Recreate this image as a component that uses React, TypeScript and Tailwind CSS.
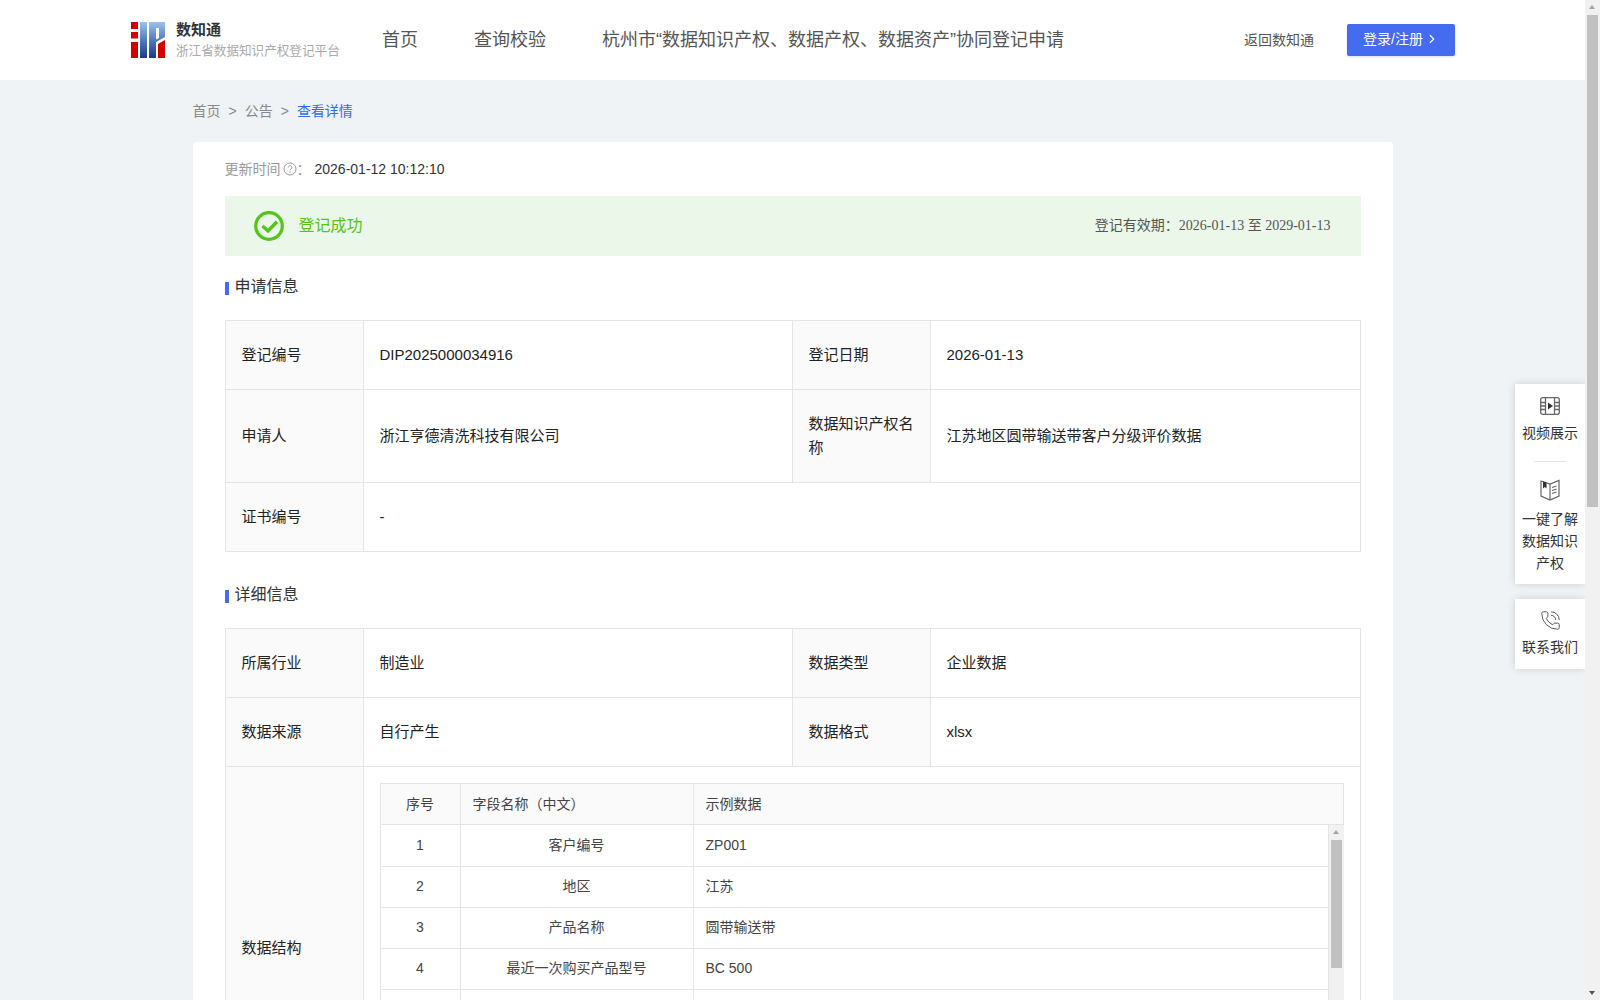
import React from "react";
import { ChevronRight, PhoneCall } from "lucide-react";

const fontStack = "font-['Liberation_Sans','Noto_Sans_CJK_SC',sans-serif]";

const navItems = ["首页", "查询校验", "杭州市“数据知识产权、数据产权、数据资产”协同登记申请"];

const fieldRows = [
    { no: "1", name: "客户编号", sample: "ZP001" },
    { no: "2", name: "地区", sample: "江苏" },
    { no: "3", name: "产品名称", sample: "圆带输送带" },
    { no: "4", name: "最近一次购买产品型号", sample: "BC 500" },
    { no: "", name: "", sample: "" },
    { no: "", name: "", sample: "" },
    { no: "", name: "", sample: "" },
];

const Logo: React.FC = () => (
    <svg width="34" height="36" viewBox="0 0 34 36" className="shrink-0">
        <defs>
            <linearGradient id="logoBlue" x1="0" y1="0" x2="0" y2="1">
                <stop offset="0" stopColor="#9cc2ee" />
                <stop offset="0.5" stopColor="#4f7cc0" />
                <stop offset="1" stopColor="#1c3a86" />
            </linearGradient>
        </defs>
        <rect x="0" y="0" width="7" height="7" fill="#d40000" />
        <rect x="0" y="10" width="7" height="6.5" fill="#d40000" />
        <rect x="0" y="20" width="7" height="16" fill="#d40000" />
        <rect x="9" y="0" width="7" height="36" fill="url(#logoBlue)" />
        <path d="M18 0h16v15l-9 5v16h-7z" fill="url(#logoBlue)" />
        <path d="M25 6h3v10l-3 1.5z" fill="#fff" />
        <path d="M27 22l7-4v18h-7z" fill="#d40000" />
    </svg>
);

const Label: React.FC<{ children: React.ReactNode }> = ({ children }) => (
    <td className="border border-[#e4e4e4] bg-[#fafafa] px-4 py-2 text-[15px] leading-[24px] text-[#222]">{children}</td>
);

const Value: React.FC<{ children: React.ReactNode; colSpan?: number }> = ({ children, colSpan }) => (
    <td colSpan={colSpan} className="border border-[#e4e4e4] px-4 py-2 text-[15px] leading-[24px] text-[#222]">
        {children}
    </td>
);

const InfoCols: React.FC = () => (
    <colgroup>
        <col className="w-[138px]" />
        <col className="w-[429px]" />
        <col className="w-[138px]" />
        <col />
    </colgroup>
);

const FieldCols: React.FC = () => (
    <colgroup>
        <col className="w-[80px]" />
        <col className="w-[233px]" />
        <col />
    </colgroup>
);

const SectionTitle: React.FC<{ title: string }> = ({ title }) => (
    <div className="flex items-center gap-[6px] text-[16px] leading-[24px] text-[#333]">
        <span className="mt-[2px] h-[13px] w-[4px] bg-[#456bf0]" />
        {title}
    </div>
);

// classic scrollbar, the screenshot shows it but headless chrome hides its own
const ScrollBar: React.FC<{ thumbTop: string; thumbHeight: string; arrowDown?: boolean }> = ({ thumbTop, thumbHeight, arrowDown }) => (
    <div className="relative h-full w-[15px] shrink-0 bg-[#f1f1f1]">
        <span className="absolute left-[4px] top-[5px] h-0 w-0 border-x-[3.5px] border-b-[4px] border-x-transparent border-b-[#a3a3a3]" />
        <span className={`absolute left-[2px] w-[11px] bg-[#c1c1c1] ${thumbTop} ${thumbHeight}`} />
        {arrowDown && (
            <span className="absolute bottom-[5px] left-[4px] h-0 w-0 border-x-[3.5px] border-t-[4px] border-x-transparent border-t-[#505050]" />
        )}
    </div>
);

const FieldTable: React.FC = () => (
    <div className="text-[14px] text-[#444]">
        <table className="w-full table-fixed border-collapse">
            <FieldCols />
            <thead>
                <tr className="h-[41px] bg-[#fafafa]">
                    <th className="border border-[#e4e4e4] text-center font-normal">序号</th>
                    <th className="border border-[#e4e4e4] px-3 text-left font-normal">字段名称（中文）</th>
                    <th className="border border-[#e4e4e4] px-3 text-left font-normal">示例数据</th>
                </tr>
            </thead>
        </table>
        <div className="flex h-[287px] overflow-hidden">
            <table className="w-full table-fixed border-collapse self-start">
                <FieldCols />
                <tbody>
                    {fieldRows.map((row, idx) => (
                        <tr key={idx} className="h-[41px]">
                            <td className="border border-t-0 border-[#e4e4e4] text-center">{row.no}</td>
                            <td className="border border-t-0 border-[#e4e4e4] text-center">{row.name}</td>
                            <td className="border border-t-0 border-[#e4e4e4] px-3">{row.sample}</td>
                        </tr>
                    ))}
                </tbody>
            </table>
            <ScrollBar thumbTop="top-[15px]" thumbHeight="h-[128px]" />
        </div>
    </div>
);

const SideMenu: React.FC = () => (
    <div className="absolute right-0 top-[384px] flex w-[70px] flex-col gap-[15px] text-center text-[14px] leading-[22px] text-[#333]">
        <div className="flex flex-col items-center bg-white pb-[10px] pt-[13px] shadow-[0_0_8px_rgba(0,0,0,0.14)]">
            <svg width="20" height="18" viewBox="0 0 20 18" fill="none" stroke="#666" strokeWidth="1.3">
                <rect x="0.7" y="0.7" width="18.6" height="16.6" rx="2" />
                <path d="M5.5 1v16M14.5 1v16M1 5.5h4.5M1 9h4.5M1 12.5h4.5M14.5 5.5H19M14.5 9H19M14.5 12.5H19" />
                <path d="M8 5.5l5 3.5-5 3.5z" fill="#333" stroke="none" />
            </svg>
            <div className="mt-[7px]">视频展示</div>
            <div className="mb-[17px] mt-[17px] h-px w-[32px] bg-[#e4e4e4]" />
            <svg width="20" height="22" viewBox="0 0 20 22" fill="none" stroke="#666" strokeWidth="1.2">
                <path d="M1 2l9 3 9-3.5V17l-9 4-9-4z" />
                <path d="M10 5v16" />
                <path d="M3 2.5l3.5 1v6L4.8 8 3 9.5z" fill="#333" stroke="none" />
                <path d="M12 8.5l4.5-1.5M12 11.5l4.5-1.5M12 14.5l4.5-1.5" />
            </svg>
            <div className="mt-[7px]">
                一键了解
                <br />
                数据知识
                <br />
                产权
            </div>
        </div>
        <div className="flex flex-col items-center bg-white pb-[11px] pt-[11px] shadow-[0_0_8px_rgba(0,0,0,0.14)]">
            <PhoneCall size={21} strokeWidth={1.1} color="#555" />
            <div className="mt-[5px]">联系我们</div>
        </div>
    </div>
);

const App: React.FC = () => {
    return (
        <div className={`flex h-screen overflow-hidden bg-[#eff3f6] ${fontStack}`}>
            <div className="relative min-w-0 flex-1 overflow-hidden">
                <header className="flex h-[80px] items-center bg-white pl-[131px] pr-[130px]">
                    <Logo />
                    <div className="ml-[11px] w-[176px]">
                        <div className="text-[15px] font-bold leading-[22px] text-[#333]">数知通</div>
                        <div className="whitespace-nowrap text-[12.6px] leading-[20px] text-[#aaa]">浙江省数据知识产权登记平台</div>
                    </div>
                    <nav className="ml-[30px] flex gap-[56px] text-[18px] text-[#555]">
                        {navItems.map((item) => (
                            <span key={item} className="whitespace-nowrap">{item}</span>
                        ))}
                    </nav>
                    <span className="ml-auto text-[14px] text-[#555]">返回数知通</span>
                    <button className="ml-[33px] flex h-[32px] w-[108px] items-center justify-center gap-[2px] rounded-[2px] bg-[#456bf0] pb-[2px] text-[14px] text-white shadow-sm">
                        登录/注册
                        <ChevronRight size={14} />
                    </button>
                </header>

                <main className="mx-auto w-[1200px]">
                    <div className="flex h-[62px] items-center gap-[8px] text-[14px] text-[#888]">
                        <span>首页</span>
                        <span>&gt;</span>
                        <span>公告</span>
                        <span>&gt;</span>
                        <span className="text-[#2f6bf0]">查看详情</span>
                    </div>

                    <section className="rounded-[4px] bg-white px-[32px] pt-[16px] pb-[40px]">
                        <div className="flex h-[22px] items-center text-[14px]">
                            <span className="text-[#999]">更新时间</span>
                            <svg width="14" height="14" viewBox="0 0 14 14" className="ml-[2px]" fill="none" stroke="#999">
                                <circle cx="7" cy="7" r="6" />
                                <path d="M5.2 5.5a1.8 1.8 0 1 1 2.8 1.5c-.7.4-1 .7-1 1.4M7 9.4v1.2" />
                            </svg>
                            <span className="w-[18px] text-[#999]">：</span>
                            <span className="text-[#333]">2026-01-12 10:12:10</span>
                        </div>

                        <div className="mt-[16px] flex h-[60px] items-center justify-between bg-[#ebf7e8] pl-[29px] pr-[30px]">
                            <div className="flex items-center gap-[15px]">
                                <svg width="30" height="30" viewBox="0 0 30 30" fill="none" stroke="#52c41a">
                                    <circle cx="15" cy="15" r="13.3" strokeWidth="3.2" />
                                    <path d="M8.5 15l5.5 5 9-9.3" strokeWidth="3.4" />
                                </svg>
                                <span className="text-[16px] text-[#52c41a]">登记成功</span>
                            </div>
                            <div className="pb-[2px] text-[14px] text-[#555]">
                                登记有效期：<span className="font-['Liberation_Serif','Noto_Sans_CJK_SC',serif]">2026-01-13 至 2029-01-13</span>
                            </div>
                        </div>

                        <div className="mt-[19px]">
                            <SectionTitle title="申请信息" />
                        </div>
                        <table className="mt-[21px] w-full table-fixed border-collapse">
                            <InfoCols />
                            <tbody>
                                <tr className="h-[69px]">
                                    <Label>登记编号</Label>
                                    <Value>DIP2025000034916</Value>
                                    <Label>登记日期</Label>
                                    <Value>2026-01-13</Value>
                                </tr>
                                <tr className="h-[93px]">
                                    <Label>申请人</Label>
                                    <Value>浙江亨德清洗科技有限公司</Value>
                                    <Label>数据知识产权名称</Label>
                                    <Value>江苏地区圆带输送带客户分级评价数据</Value>
                                </tr>
                                <tr className="h-[69px]">
                                    <Label>证书编号</Label>
                                    <Value colSpan={3}>-</Value>
                                </tr>
                            </tbody>
                        </table>

                        <div className="mt-[31px]">
                            <SectionTitle title="详细信息" />
                        </div>
                        <table className="mt-[21px] w-full table-fixed border-collapse">
                            <InfoCols />
                            <tbody>
                                <tr className="h-[69px]">
                                    <Label>所属行业</Label>
                                    <Value>制造业</Value>
                                    <Label>数据类型</Label>
                                    <Value>企业数据</Value>
                                </tr>
                                <tr className="h-[69px]">
                                    <Label>数据来源</Label>
                                    <Value>自行产生</Value>
                                    <Label>数据格式</Label>
                                    <Value>xlsx</Value>
                                </tr>
                                <tr>
                                    <Label>数据结构</Label>
                                    <td colSpan={3} className="border border-[#e4e4e4] p-4">
                                        <FieldTable />
                                    </td>
                                </tr>
                            </tbody>
                        </table>
                    </section>
                </main>

                <SideMenu />
            </div>
            <ScrollBar thumbTop="top-[15px]" thumbHeight="h-[492px]" arrowDown />
        </div>
    );
};

export default App;
